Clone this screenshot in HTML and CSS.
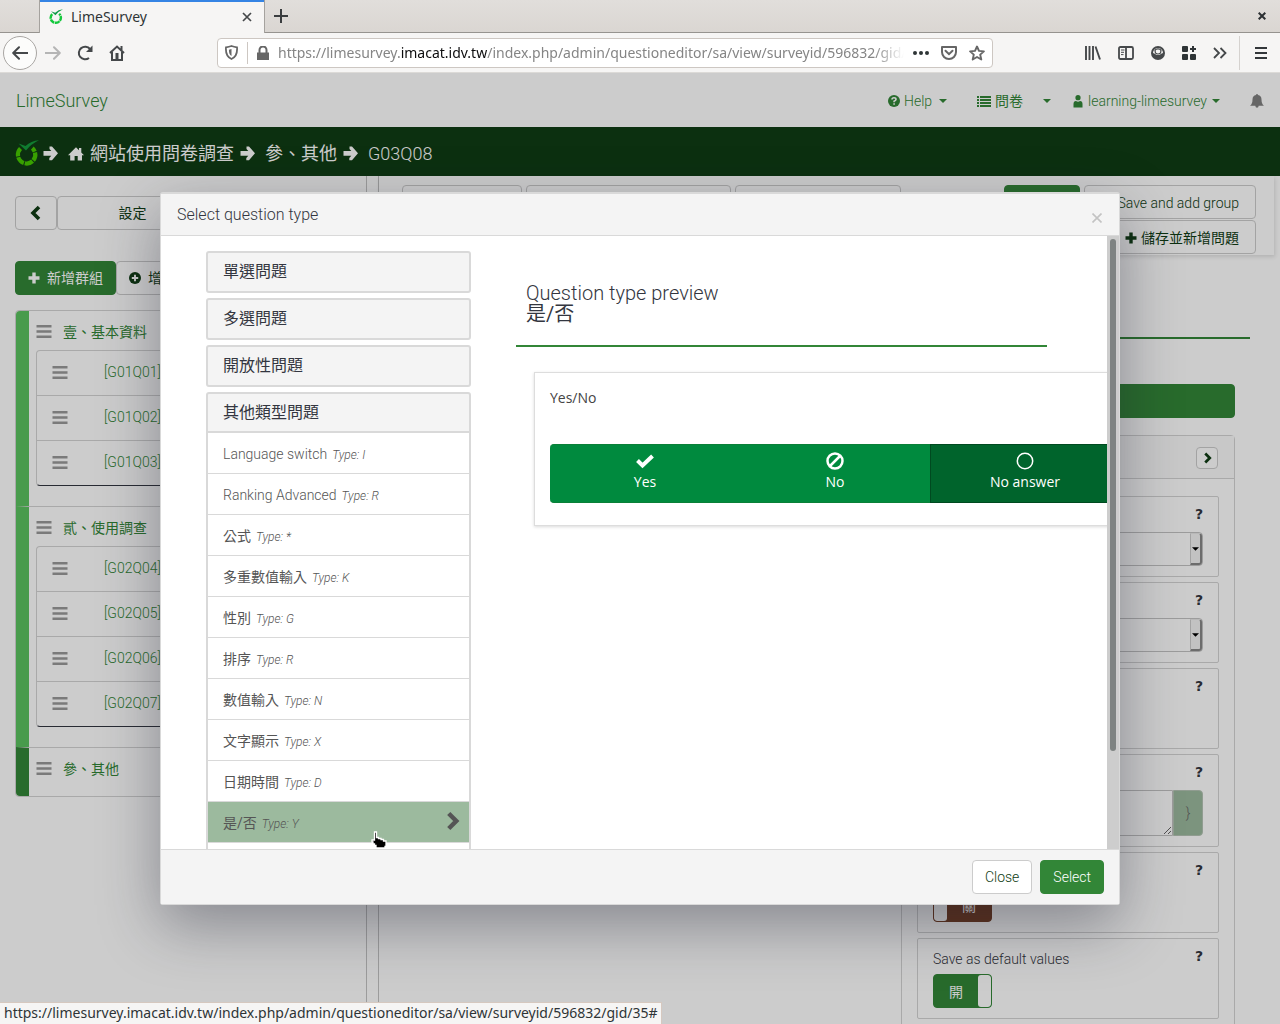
FILE: index.html
```html
<!DOCTYPE html>
<html lang="zh-Hant">
<head>
<meta charset="utf-8">
<title>LimeSurvey</title>
<link rel="stylesheet" href="styles.css">
</head>
<body>
<svg class="defs" aria-hidden="true">
  <symbol id="lime" viewBox="0 0 24 27">
    <path class="lime-ring" d="M5.500 8.600A8.700 8.700 0 1 0 17.300 8.200" fill="none" stroke-width="4.200" stroke-dasharray="8.300 1"/>
    <path class="lime-tick" d="M3.500 3.500L10.500 6Q16 1 24 0.300 16 4 11 10.500z"/>
  </symbol>
  <symbol id="arrow" viewBox="0 0 15 15"><path d="M6.500 0.500h2.500L15 7.300 9 14.300H6.300V12L8.300 9.700H0.500V5H8.300L6.500 3z"/></symbol>
  <symbol id="home" viewBox="0 0 16 14"><path d="M8 0.300L11 3.200V1h2.300v4.400L16 8.200h-2V13.500H9.700V9H6.600v4.500H2.200V8.200H0z"/></symbol>
  <symbol id="bars" viewBox="0 0 16 13"><path d="M0.500 0h15v2.500h-15zM0.500 5.200h15v2.500h-15zM0.500 10.400h15v2.500h-15z"/></symbol>
  <symbol id="plus" viewBox="0 0 12 12"><path d="M4.300 0.500h3.400v3.800h3.800v3.400H7.700v3.800H4.300V7.700H0.500V4.300h3.800z"/></symbol>
  <symbol id="chev" viewBox="0 0 12 16"><path d="M3 2l6 6-6 6" fill="none" stroke="currentColor" stroke-width="3.600"/></symbol>
  <symbol id="caret" viewBox="0 0 8 4"><path d="M0 0h8L4 4z"/></symbol>
</svg>

<div class="window">
  <header class="chrome">
    <div class="tabs">
      <div class="tab">
        <svg class="i16 lime-bright"><use href="#lime"/></svg>
        <span>LimeSurvey</span>
        <button class="bare" aria-label="Close tab"><svg width="10" height="10" viewBox="0 0 10 10"><path d="M1 1l8 8M9 1l-8 8" stroke="#45484a" stroke-width="1.700"/></svg></button>
      </div>
      <button class="bare newtab" aria-label="New tab"><svg width="14" height="14" viewBox="0 0 14 14"><path d="M7 0v14M0 7h14" stroke="#3a3d3f" stroke-width="2"/></svg></button>
      <button class="bare closewin" aria-label="Close window"><svg width="8" height="8" viewBox="0 0 8 8"><path d="M0.700 0.700l6.600 6.600M7.300 0.700L0.700 7.300" stroke="#2c3033" stroke-width="2"/></svg></button>
    </div>
    <div class="toolbar">
      <div class="navbtns">
        <button class="bare back" aria-label="Back"><svg width="16" height="14" viewBox="0 0 16 14"><path d="M15.500 7H1.500M7 1.200L1.200 7 7 12.800" fill="none" stroke="#45484a" stroke-width="2" stroke-linejoin="round" stroke-linecap="round"/></svg></button>
        <button class="bare" aria-label="Forward"><svg width="16" height="14" viewBox="0 0 16 14"><path d="M0.500 7h14M9 1.200L14.800 7 9 12.800" fill="none" stroke="#b5b5b5" stroke-width="2" stroke-linejoin="round" stroke-linecap="round"/></svg></button>
        <button class="bare" aria-label="Reload"><svg width="16" height="16" viewBox="0 0 16 16"><path d="M12 13A6.300 6.300 0 1 1 13 4" fill="none" stroke="#45484a" stroke-width="2"/><path d="M15.500 0.500V7H9z" fill="#45484a"/></svg></button>
        <button class="bare" aria-label="Home"><svg width="16" height="16" viewBox="0 0 16 16"><path d="M1 8l7-6.500L15 8M3 7v8h10V7M12.500 1v4" fill="none" stroke="#45484a" stroke-width="2"/><path d="M6.500 8h3v7h-3z" fill="#45484a"/></svg></button>
      </div>
      <div class="address">
        <svg width="13" height="15" viewBox="0 0 13 15"><path d="M1 2.300Q4 2 6.500 1 9 2 12 2.300C12.500 8 11 12 6.500 14 2 12 0.500 8 1 2.300z" fill="none" stroke="#666" stroke-width="1.800"/><path d="M6.500 4v7C4.500 10 4 8 3.900 4.700z" fill="#666"/></svg>
        <span class="bar"></span>
        <svg width="12" height="14" viewBox="0 0 12 14"><path d="M0 6.500h12V14H0z" fill="#666"/><path d="M2.500 7V4a3.500 3.500 0 0 1 7 0v3" fill="none" stroke="#666" stroke-width="2"/></svg>
        <div class="url" role="textbox" aria-label="Address" contenteditable="true" spellcheck="false">https://limesurvey.<b>imacat.idv.tw</b>/index.php/admin/questioneditor/sa/view/surveyid/596832/gid/</div>
        <svg width="16" height="4" viewBox="0 0 16 4" fill="#666"><circle cx="2" cy="2" r="2"/><circle cx="8" cy="2" r="2"/><circle cx="14" cy="2" r="2"/></svg>
        <svg width="16" height="14" viewBox="0 0 16 14"><path d="M1 1h14v5a7 7 0 0 1-14 0z" fill="none" stroke="#666" stroke-width="2" stroke-linejoin="round"/><path d="M4.500 4.800L8 8.200l3.500-3.400" fill="none" stroke="#666" stroke-width="2" stroke-linecap="round"/></svg>
        <svg width="16" height="16" viewBox="0 0 16 16"><path d="M8 1.500l2 4.400 4.900.5-3.700 3.200 1.100 4.900L8 12l-4.300 2.500 1.100-4.900L1.100 6.400 6 5.900z" fill="none" stroke="#666" stroke-width="1.900" stroke-linejoin="round"/></svg>
      </div>
      <div class="tools">
        <svg width="16" height="14" viewBox="0 0 16 14"><path d="M1 0v14M4.500 0v14M8 0v14M10.500 0.500L15 13.500" stroke="#45484a" stroke-width="1.900"/></svg>
        <svg width="16" height="14" viewBox="0 0 16 14"><path d="M1 2.500Q1 1 2.500 1h11Q15 1 15 2.500v9q0 1.500-1.500 1.500h-11Q1 13 1 11.500zM8 1v12" fill="none" stroke="#45484a" stroke-width="1.800"/><path d="M3 4h3.500M3 6.300h3M3 8.600h2.500" stroke="#45484a"/></svg>
        <svg width="14" height="14" viewBox="0 0 14 14"><circle cx="7" cy="7" r="7" fill="#45484a"/><path d="M7 2a5 5 0 0 0-5 5l1.800.8Q5 9 7 9t3.200-1.200L12 7a5 5 0 0 0-5-5z" fill="#f6f5f4"/><path d="M4 4.500Q4.500 2.800 7 2.800T10 4.500L9.500 7Q7 9 4.500 7z" fill="#f6f5f4" stroke="#45484a" stroke-width="1.200"/></svg>
        <svg width="14" height="14" viewBox="0 0 14 14" fill="#33373a"><rect width="6" height="6" rx="1"/><rect y="8" width="6" height="6" rx="1"/><rect x="8" y="8" width="6" height="6" rx="1"/><path d="M10 0h2v2h2v2h-2v2h-2V4H8V2h2z"/></svg>
        <svg width="14" height="12" viewBox="0 0 14 12"><path d="M1 1l5 5-5 5M7.500 1l5 5-5 5" fill="none" stroke="#45484a" stroke-width="1.800"/></svg>
      </div>
      <span class="sep"></span>
      <svg width="12" height="12" viewBox="0 0 12 12"><path d="M0 1h12M0 6h12M0 11h12" stroke="#33373a" stroke-width="2"/></svg>
    </div>
  </header>

  <div class="app">
    <nav class="topnav">
      <a class="brand" href="#">LimeSurvey</a>
      <a class="help" href="#"><svg width="12" height="12" viewBox="0 0 12 12"><circle cx="6" cy="6" r="6"/><path d="M4 4.500Q4 2.800 6 2.800T8 4.400Q8 5.300 6.100 6.200V7.200M6.100 8.200v1.600" fill="none" stroke="#fff" stroke-width="1.600"/></svg>Help <svg class="caret"><use href="#caret"/></svg></a>
      <a class="surveys zh" href="#"><svg width="14" height="11" viewBox="0 0 14 11"><path d="M0 0h2v2H0zM3 0h11v2H3zM0 3h2v2H0zM3 3h11v2H3zM0 6h2v2H0zM3 6h11v2H3zM0 9h2v2H0zM3 9h11v2H3z"/></svg>問卷</a>
      <a class="more" href="#" aria-label="More"><svg class="caret"><use href="#caret"/></svg></a>
      <a class="user" href="#"><svg width="10" height="13" viewBox="0 0 10 13"><circle cx="5" cy="2.700" r="2.600"/><path d="M0.500 12.500V9Q0.500 6 3 6q2 1.500 4 0 2.500 0 2.500 3v3.500z"/></svg>learning-limesurvey <svg class="caret"><use href="#caret"/></svg></a>
      <a class="bell" href="#" aria-label="Notifications"><svg width="14" height="14" viewBox="0 0 14 14"><path d="M7 0q1 0 1 1 3.500.7 3.500 4.500 0 4.500 2.500 6.300H8.700Q8.500 13.800 7 13.800T5.300 11.800H0Q2.500 10 2.500 5.500 2.500 1.700 6 1 6 0 7 0z"/></svg></a>
    </nav>
    <nav class="crumbs">
      <svg class="logo lime-dark"><use href="#lime"/></svg>
      <svg class="i15"><use href="#arrow"/></svg>
      <a class="zh" href="#"><svg class="house"><use href="#home"/></svg>網站使用問卷調查</a>
      <svg class="i15"><use href="#arrow"/></svg>
      <a class="grp zh" href="#">參、其他</a>
      <svg class="i15"><use href="#arrow"/></svg>
      <span class="current">G03Q08</span>
    </nav>

    <div class="main">
      <aside class="side">
        <div class="row">
          <button class="btn collapse" aria-label="Collapse"><svg class="chev flip"><use href="#chev"/></svg></button>
          <button class="btn settings zh">設定</button>
        </div>
        <div class="row second">
          <button class="btn green zh"><svg class="i12"><use href="#plus"/></svg>新增群組</button>
          <button class="btn zh"><svg width="12" height="12" viewBox="0 0 12 12"><circle cx="6" cy="6" r="6"/><path d="M6 2.800v6.400M2.800 6h6.400" stroke="#fff" stroke-width="1.900"/></svg>增</button>
        </div>
        <ul class="groups">
          <li><div class="gh"><svg class="bars"><use href="#bars"/></svg><a class="zh" href="#">壹、基本資料</a></div>
            <ul>
              <li><svg class="bars"><use href="#bars"/></svg><a href="#">[G01Q01]</a></li>
              <li><svg class="bars"><use href="#bars"/></svg><a href="#">[G01Q02]</a></li>
              <li><svg class="bars"><use href="#bars"/></svg><a href="#">[G01Q03]</a></li>
            </ul></li>
          <li><div class="gh"><svg class="bars"><use href="#bars"/></svg><a class="zh" href="#">貳、使用調查</a></div>
            <ul>
              <li><svg class="bars"><use href="#bars"/></svg><a href="#">[G02Q04]</a></li>
              <li><svg class="bars"><use href="#bars"/></svg><a href="#">[G02Q05]</a></li>
              <li><svg class="bars"><use href="#bars"/></svg><a href="#">[G02Q06]</a></li>
              <li><svg class="bars"><use href="#bars"/></svg><a href="#">[G02Q07]</a></li>
            </ul></li>
          <li class="on"><div class="gh"><svg class="bars"><use href="#bars"/></svg><a class="zh" href="#">參、其他</a></div></li>
        </ul>
      </aside>

      <section class="editor">
        <div class="actions">
          <button class="btn w120" aria-label="Preview survey"></button>
          <button class="btn w205" aria-label="Preview group"></button>
          <button class="btn w166" aria-label="Preview question"></button>
          <div class="saves">
            <button class="btn green w76" aria-label="Save"></button>
            <button class="btn"><svg class="i12"><use href="#plus"/></svg>Save and add group</button>
            <button class="btn zh"><svg class="i12"><use href="#plus"/></svg>儲存並新增問題</button>
          </div>
        </div>
        <div class="rule"></div>
        <div class="right">
          <button class="btn green wide" aria-label="Question type"></button>
          <div class="panel">
            <div class="phead"><button class="btn mini" aria-label="Expand"><svg class="chev"><use href="#chev"/></svg></button></div>
            <div class="pbody">
              <div class="card"><div class="lab"><b>?</b></div><div class="sel"><select aria-label="Option one"></select><span><svg class="caret"><use href="#caret"/></svg></span></div></div>
              <div class="card"><div class="lab"><b>?</b></div><div class="sel"><select aria-label="Option two"></select><span><svg class="caret"><use href="#caret"/></svg></span></div></div>
              <div class="card"><div class="lab"><b>?</b></div></div>
              <div class="card"><div class="lab"><b>?</b></div><div class="cond"><textarea aria-label="Relevance equation"></textarea><span>}</span></div></div>
              <div class="card"><div class="lab"><b>?</b></div><label class="switch off"><input type="checkbox" aria-label="Option five"><i></i><span>關</span></label></div>
              <div class="card"><div class="lab"><label for="dflt">Save as default values</label><b>?</b></div><label class="switch"><input id="dflt" type="checkbox" checked><span>開</span><i></i></label></div>
            </div>
          </div>
        </div>
      </section>
    </div>

    <div class="backdrop">
      <div class="modal" role="dialog" aria-labelledby="mt">
        <div class="mhead"><h2 id="mt">Select question type</h2><button class="bare" aria-label="Dismiss"><svg width="10" height="10" viewBox="0 0 10 10"><path d="M0.500 0.500l9 9M9.500 0.500l-9 9" stroke="#c3c3c3" stroke-width="1.600"/></svg></button></div>
        <div class="mbody">
          <div class="mcontent">
            <div class="types">
              <button class="cat">單選問題</button>
              <button class="cat">多選問題</button>
              <button class="cat">開放性問題</button>
              <div class="open">
                <button class="cat">其他類型問題</button>
                <a href="#">Language switch <em>Type: I</em></a>
                <a href="#">Ranking Advanced <em>Type: R</em></a>
                <a class="zh" href="#">公式 <em>Type: *</em></a>
                <a class="zh" href="#">多重數值輸入 <em>Type: K</em></a>
                <a class="zh" href="#">性別 <em>Type: G</em></a>
                <a class="zh" href="#">排序 <em>Type: R</em></a>
                <a class="zh" href="#">數值輸入 <em>Type: N</em></a>
                <a class="zh" href="#">文字顯示 <em>Type: X</em></a>
                <a class="zh" href="#">日期時間 <em>Type: D</em></a>
                <a class="sel-row zh" href="#">是/否 <em>Type: Y</em><svg class="chev"><use href="#chev"/></svg></a>
                <a href="#" aria-label="Next type"></a>
              </div>
            </div>
            <div class="preview">
              <h3><span>Question type preview</span><span class="zh">是/否</span></h3>
              <div class="sample">
                <p>Yes/No</p>
                <div class="choices">
                  <button><svg width="18" height="18" viewBox="0 0 18 18"><path d="M1.500 8.500l5 5L16.500 4" fill="none" stroke="#fff" stroke-width="4"/></svg>Yes</button>
                  <button><svg width="18" height="18" viewBox="0 0 18 18"><circle cx="9" cy="9" r="7.500" fill="none" stroke="#fff" stroke-width="2.500"/><path d="M14 4L4 14" stroke="#fff" stroke-width="2.500"/></svg>No</button>
                  <button class="picked"><svg width="18" height="18" viewBox="0 0 18 18"><circle cx="9" cy="9" r="7.700" fill="none" stroke="#fff" stroke-width="1.500"/></svg>No answer</button>
                </div>
              </div>
            </div>
          </div>
          <div class="scroll"><span></span></div>
          <svg class="pointer" width="18" height="18" viewBox="0 0 18 18"><path d="M3.500 1h2v5.500h2v1h2.500v1h2.500v1.500H15v5.500h-1V17H5v-2.500H3.500V13H2v-2H1V9h2.500z" stroke="#fff" stroke-width="1.300"/></svg>
        </div>
        <div class="mfoot"><button class="btn">Close</button><button class="btn green">Select</button></div>
      </div>
    </div>
    <div class="status">https://limesurvey.imacat.idv.tw/index.php/admin/questioneditor/sa/view/surveyid/596832/gid/35#</div>
  </div>
</div>
</body>
</html>
```
FILE: styles.css
```css
* { box-sizing: border-box; }
body { margin: 0; font: 300 14px/20px Roboto, "Noto Sans CJK TC", sans-serif; color: #333640; }
svg { flex: none; fill: currentColor; }
a { color: inherit; text-decoration: none; }
button, select, textarea { font: inherit; color: inherit; margin: 0; }
ul, h2, h3, p { margin: 0; padding: 0; list-style: none; font-weight: 300; }
.defs { position: absolute; width: 0; height: 0; }
.zh { font-weight: 400; }
.bare { border: 0; background: none; padding: 0; display: flex; align-items: center; justify-content: center; }
.i12 { width: 12px; height: 12px; }
.i15 { width: 15px; height: 15px; }
.i16 { width: 14px; height: 16px; }
.caret { width: 8px; height: 4px; }
.bars { width: 16px; height: 13px; color: #999; }
.chev { width: 12px; height: 16px; }
.flip { transform: rotate(180deg); }
.lime-bright { --ring: #14c83c; --tick: #0f9a47; }
.lime-dark { --ring: #46c800; --tick: #149c3c; }
.lime-ring { stroke: var(--ring); }
.lime-tick { fill: var(--tick); }

.window { height: 100vh; display: flex; flex-direction: column; overflow: hidden; }

/* browser chrome */
.chrome { font: 400 14px/20px "Noto Sans", "Noto Sans CJK TC", sans-serif; color: #2e3436; flex: none; }
.tabs { height: 33px; padding-left: 39px; display: flex; background: linear-gradient(#e1dedb, #dad6d2); border-bottom: 1px solid #96938f; }
.tab { width: 226px; height: 33px; padding: 0 12px 0 9px; display: flex; align-items: center; gap: 8px; background: #f6f5f4; border: 1px solid #a5a29e; border-width: 0 1px; box-shadow: inset 0 2px #3584e4; }
.tab span { flex: 1; }
.newtab { margin-left: 9px; }
.closewin { margin: 0 14px 0 auto; }
.toolbar { height: 40px; padding: 0 13px 0 3px; display: flex; align-items: center; background: #f6f5f4; border-bottom: 1px solid #dcdad7; }
.navbtns { display: flex; align-items: center; gap: 16px; margin-right: 92px; }
.back { width: 34px; height: 34px; border: 1px solid #a9a6a3; border-radius: 50%; background: #fcfcfb; margin-right: -8px; }
.address { flex: 1; height: 30px; padding: 0 7px; display: flex; align-items: center; gap: 9px; background: #fff; border: 1px solid #cdc7c2; border-radius: 4px; min-width: 0; }
.bar { width: 1px; height: 22px; background: #cdc7c2; }
.url { flex: 1; overflow: hidden; white-space: nowrap; color: #858585; outline: 0; -webkit-mask: linear-gradient(to left, transparent, #000 30px); mask: linear-gradient(to left, transparent, #000 30px); }
.url b { font-weight: 400; color: #0c0c0d; }
.address svg:nth-last-child(2) { margin-left: 3px; }
.address svg:last-child { margin-left: 3px; }
.tools { display: flex; align-items: center; gap: 17px; margin: 0 12px 0 92px; }
.sep { width: 1px; height: 34px; background: #d5d2cf; margin-right: 15px; }

/* application */
.app { position: relative; flex: 1; min-height: 0; overflow: hidden; display: flex; flex-direction: column; background: #fff; }
.topnav { height: 54px; flex: none; padding: 2px 16px 0; display: flex; align-items: center; color: #328637; }
.topnav a { display: flex; align-items: center; }
.topnav .brand { font-size: 18px; margin-right: auto; }
.help { gap: 4px; }
.help .caret { margin-left: 3px; }
.surveys { gap: 4px; margin-left: 30px; }
.more { margin-left: 20px; }
.user { gap: 5px; margin-left: 22px; }
.topnav .bell { color: #808080; margin-left: 30px; }
.crumbs { height: 49px; flex: none; padding: 4px 15px 0; display: flex; align-items: center; gap: 6px; color: #fff; background: #0f3c14; font-size: 18px; line-height: 26px; }
.crumbs a { display: flex; align-items: center; gap: 6px; margin-left: 4px; }
.crumbs .grp, .current { margin-left: 4px; }
.logo { width: 24px; height: 27px; margin-right: -2px; }
.house { width: 16px; height: 14px; }
.main { flex: 1; min-height: 0; display: flex; }
.btn { height: 34px; padding: 0 12px; display: flex; align-items: center; justify-content: center; gap: 7px; border: 1px solid #ccc; border-radius: 4px; background: #fff; color: #0f3c14; white-space: nowrap; }
.green { background: #328637; border-color: #328637; color: #fff; }

.side { width: 367px; flex: none; padding: 20px 15px 0; border-right: 1px solid #c4c4c4; }
.row { display: flex; }
.second { margin-top: 31px; }
.collapse { width: 42px; }
.settings { width: 151px; }
.groups { margin-top: 15px; border: 1px solid #d4d4d4; border-radius: 4px; color: #328637; }
.groups > li { padding: 0 0 20px 20px; border-left: 13px solid #5bc25f; border-top: 1px solid #d4d4d4; }
.groups > li:first-child { border-top: 0; border-top-left-radius: 4px; }
.groups > .on { border-left-color: #328637; padding-bottom: 9px; border-bottom-left-radius: 4px; }
.gh { display: flex; align-items: center; gap: 11px; height: 39px; margin-left: -13px; }
.gh a { padding-top: 2px; }
.gh .bars { margin-top: 2px; }
.groups ul { margin-left: -13px; border: 1px solid #d4d4d4; border-bottom-color: #333640; border-radius: 4px; }
.groups ul li { height: 45px; padding: 0 0 2px 15px; display: flex; align-items: center; gap: 36px; border-bottom: 1px solid #d4d4d4; }
.groups ul li:last-child { border: 0; height: 44px; }

.editor { flex: 1; min-width: 0; margin-left: 11px; border-left: 1px solid #c4c4c4; display: flex; flex-direction: column; }
.actions { display: flex; gap: 4px; padding: 9px 18px 1px 23px; margin-right: 6px; box-shadow: 1px 2px 4px rgba(0,0,0,.12); }
.saves { flex: 1; display: flex; flex-wrap: wrap; justify-content: flex-end; gap: 1px 4px; margin-left: 60px; }
.saves .btn { padding: 1px 16px 0; gap: 4px; }
.w120 { width: 120px; } .w205 { width: 205px; } .w166 { width: 166px; } .w76 { width: 76px; }
.rule { margin: 82px 30px 0 23px; border-bottom: 2px solid #328637; }
.right { width: 334px; align-self: flex-end; margin: 45px 45px 0 0; }
.wide { width: 100%; }
.panel { margin-top: 17px; height: 620px; border: 1px solid #d4d4d4; border-radius: 4px; }
.phead { height: 43px; padding: 2px 16px 0; display: flex; align-items: center; justify-content: flex-end; background: #fafafa; border-bottom: 1px solid #d4d4d4; }
.mini { width: 22px; height: 22px; padding: 0; }
.mini .chev { width: 9px; height: 12px; }
.pbody { padding: 17px 15px; display: grid; gap: 5px; }
.card { min-height: 81px; padding: 10px 15px; border: 1px solid #d4d4d4; border-radius: 2px; }
.lab { display: flex; justify-content: space-between; height: 25px; }
.lab b { margin-left: auto; font: 700 14px/14px "DejaVu Sans", sans-serif; }
.sel { height: 34px; display: flex; border: 1px solid #c4c4c4; border-radius: 4px; }
.sel select { flex: 1; min-width: 0; appearance: none; border: 0; background: none; }
.sel span { width: 12px; display: flex; align-items: center; justify-content: center; color: #000; border: 2px solid; border-color: #e6e6e6 #888 #888 #ccc; background: #f3f3f3; border-width: 1px 2px 2px 1px; border-radius: 0 3px 3px 0; }
.sel .caret { width: 7px; }
.cond { height: 46px; display: flex; }
.cond textarea { flex: 1; min-width: 0; resize: vertical; border: 1px solid #c4c4c4; border-radius: 4px 0 0 4px; background: #fff; }
.cond span { width: 30px; display: flex; align-items: center; justify-content: center; background: #9cba9e; border: 1px solid #b4c4b4; border-radius: 0 4px 4px 0; color: #666; }
.switch { width: 59px; height: 34px; display: flex; border: 1px solid #328637; border-radius: 4px; background: #328637; color: #fff; overflow: hidden; font-weight: 400; }
.switch span { flex: 1; text-align: center; line-height: 34px; }
.switch i { width: 13px; background: #fff; border-radius: 3px; }
.switch input { position: absolute; opacity: 0; }
.off { background: #743c22; border-color: #743c22; }

/* dialog */
.backdrop { position: absolute; inset: 0; padding: 119px 0; background: rgba(0,0,0,.2); }
.modal { width: 75%; margin: 0 auto; background: #fff; border: 1px solid #d9d9d9; border-top-width: 2px; border-radius: 3px; box-shadow: 0 20px 60px rgba(30,32,50,.4); }
.mhead { height: 42px; padding: 0 17px 0 16px; display: flex; align-items: center; justify-content: space-between; background: #f4f4f4; border-bottom: 1px solid #d9d9d9; }
.mhead h2 { font-size: 16px; line-height: 20px; }
.mhead .bare { padding-top: 6px; }
.mbody { position: relative; height: 613px; display: flex; overflow: hidden; }
.mcontent { flex: 1; min-width: 0; overflow: hidden; display: flex; padding: 15px 0 0 45px; }
.types { width: 265px; flex: none; display: flex; flex-direction: column; gap: 5px; }
.types > * { flex: none; }
.cat { width: 100%; height: 42px; padding: 0 15px; text-align: left; font-size: 16px; font-weight: 400; background: #f4f4f4; border: 2px solid #d9d9d9; border-radius: 3px; }
.open .cat { height: 41px; border-radius: 3px 3px 0 0; display: block; }
.open a { height: 41px; padding: 2px 9px 0 15px; display: flex; align-items: center; gap: 5px; color: #555; border: 2px solid #d9d9d9; border-width: 0 2px 1px; }
.open em { font-size: 12px; font-weight: 300; padding-top: 2px; }
.open .sel-row { background: #9cba9e; background-clip: padding-box; }
.sel-row .chev { margin: -4px 0 0 auto; width: 15px; height: 20px; }
.preview { margin-left: 45px; width: 531px; flex: none; padding-top: 32px; }
.preview h3 { font-size: 20px; line-height: 21px; padding: 0 10px 20px; border-bottom: 2px solid #328637; display: flex; flex-direction: column; }
.sample { margin: 25px 0 0 18px; width: 602px; height: 154px; padding: 15px; border: 1px solid #ddd; box-shadow: 0 1px 3px rgba(0,0,0,.15); font-family: "Open Sans", sans-serif; font-weight: 400; }
.sample p { font-weight: 400; color: #444; }
.choices { display: flex; margin-top: 36px; }
.choices button { width: 190px; height: 59px; padding: 0 0 3px; flex: none; display: flex; flex-direction: column; align-items: center; justify-content: center; gap: 2px; border: 1px solid #0a8038; border-width: 1px 0; background: #008a3e; color: #fff; }
.choices button:first-child { border-radius: 4px 0 0 4px; }
.choices .picked { background: #00642c; border: 1px solid #004a20; }
.scroll { width: 12px; padding: 3px 3px 0; background: #cdcdcd; }
.scroll span { display: block; height: 512px; border-radius: 3px; background: #7e8382; }
.pointer { position: absolute; left: 210px; top: 595px; fill: #000; }
.mfoot { height: 55px; padding: 0 15px; display: flex; align-items: center; justify-content: flex-end; gap: 8px; background: #f4f4f4; border-top: 1px solid #d9d9d9; }
.status { position: absolute; left: 0; bottom: 0; padding: 0 3px 1px 4px; background: #f6f5f4; border: 1px solid #d6c8bf; border-width: 1px 1px 0 0; font: 400 14px/20px "Noto Sans", sans-serif; color: #2e3436; }
```
